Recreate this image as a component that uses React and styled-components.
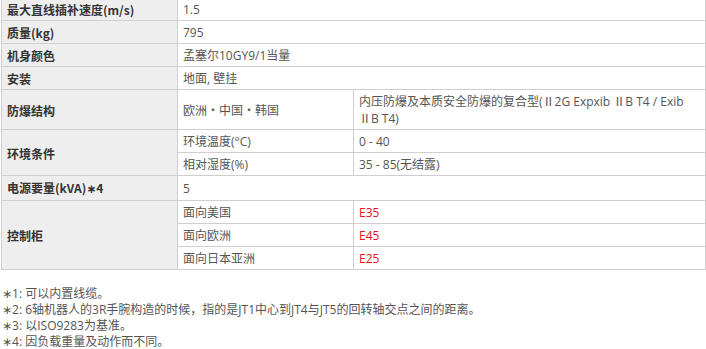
import React from "react";
import styled, { createGlobalStyle } from "styled-components";

const Global = createGlobalStyle`
  html, body { margin: 0; padding: 0; background: #fff; }
  body { font-family: "Open Sans", "Noto Sans CJK SC", sans-serif; font-size: 12px; color: #555; }
`;

const Page = styled.div`
  padding-left: 1px;
  width: 705px;
`;

const Table = styled.table`
  border-collapse: collapse;
  width: 705px;
  margin-top: -3px;
  table-layout: fixed;
`;

const Cell = styled.td`
  border: 1px solid #cfcfcf;
  padding: 3px 5px 2px;
  line-height: 17px;
  vertical-align: middle;
  font-size: 12px;
  color: ${(p) => (p.$red ? "#e8101e" : "#555")};
  background: #fff;
  text-align: left;
`;

const Label = styled(Cell).attrs({ as: "th" })`
  background: #eeeeee;
  color: #333;
  font-weight: bold;
  font-family: "Noto Sans CJK SC", sans-serif;
`;

const Star = styled.span`
  font-family: "DejaVu Sans", sans-serif;
`;

const Notes = styled.div`
  margin-top: 16px;
  padding-left: 1px;
  font-size: 12px;
  line-height: 16px;
  color: #555;
`;

const Note = styled.p`
  margin: 0;
`;

export default function App() {
  return (
    <Page>
      <Global />
      <Table>
        <colgroup>
          <col style={{ width: 176 }} />
          <col style={{ width: 176 }} />
          <col />
        </colgroup>
        <tbody>
          <tr>
            <Label>最大直线插补速度(m/s)</Label>
            <Cell colSpan={2}>1.5</Cell>
          </tr>
          <tr>
            <Label>质量(kg)</Label>
            <Cell colSpan={2}>795</Cell>
          </tr>
          <tr>
            <Label>机身颜色</Label>
            <Cell colSpan={2}>孟塞尔10GY9/1当量</Cell>
          </tr>
          <tr>
            <Label>安装</Label>
            <Cell colSpan={2}>地面, 壁挂</Cell>
          </tr>
          <tr>
            <Label>防爆结构</Label>
            <Cell>欧洲・中国・韩国</Cell>
            <Cell>内压防爆及本质安全防爆的复合型(Ⅱ2G Expxib ⅡB T4 / Exib ⅡB T4)</Cell>
          </tr>
          <tr>
            <Label rowSpan={2}>环境条件</Label>
            <Cell>环境温度(°C)</Cell>
            <Cell>0 - 40</Cell>
          </tr>
          <tr>
            <Cell>相对湿度(%)</Cell>
            <Cell>35 - 85(无结露)</Cell>
          </tr>
          <tr>
            <Label>电源要量(kVA)<Star>∗</Star>4</Label>
            <Cell colSpan={2}>5</Cell>
          </tr>
          <tr>
            <Label rowSpan={3}>控制柜</Label>
            <Cell>面向美国</Cell>
            <Cell $red>E35</Cell>
          </tr>
          <tr>
            <Cell>面向欧洲</Cell>
            <Cell $red>E45</Cell>
          </tr>
          <tr>
            <Cell>面向日本亚洲</Cell>
            <Cell $red>E25</Cell>
          </tr>
        </tbody>
      </Table>
      <Notes>
        <Note><Star>∗</Star>1: 可以内置线缆。</Note>
        <Note><Star>∗</Star>2: 6轴机器人的3R手腕构造的时候，指的是JT1中心到JT4与JT5的回转轴交点之间的距离。</Note>
        <Note><Star>∗</Star>3: 以ISO9283为基准。</Note>
        <Note><Star>∗</Star>4: 因负载重量及动作而不同。</Note>
      </Notes>
    </Page>
  );
}
